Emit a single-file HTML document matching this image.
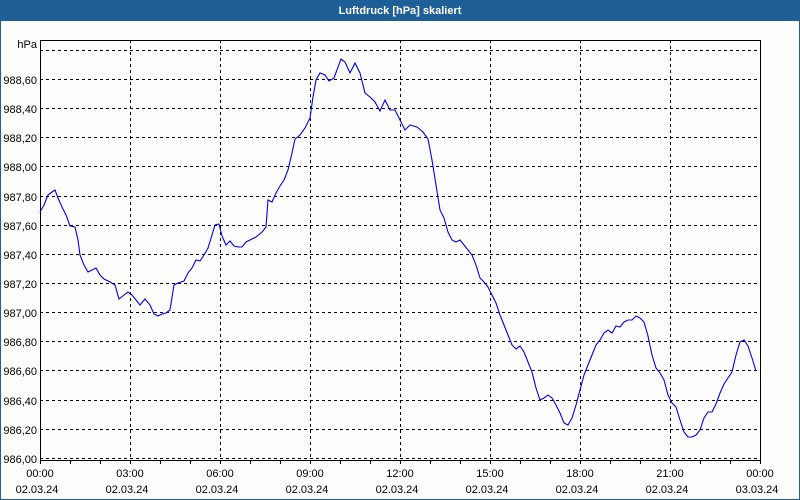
<!DOCTYPE html>
<html><head><meta charset="utf-8"><style>
html,body{margin:0;padding:0;background:#fff;}
body{width:800px;height:500px;position:relative;overflow:hidden;font-family:"Liberation Sans",sans-serif;}
</style></head><body>
<svg width="800" height="500" xmlns="http://www.w3.org/2000/svg" style="position:absolute;left:0;top:0">
<rect x="0" y="0" width="800" height="500" fill="#1f5f97"/>
<rect x="1" y="21" width="798" height="478" fill="#fdfefd"/>
<text x="400" y="14" fill="#fff" font-size="11" font-weight="bold" text-anchor="middle" font-family="Liberation Sans, sans-serif">Luftdruck [hPa] skaliert</text>
<g stroke="#000" stroke-width="1" stroke-dasharray="3,3" shape-rendering="crispEdges">
<line x1="40" y1="50.5" x2="760" y2="50.5"/>
<line x1="40" y1="79.5" x2="760" y2="79.5"/>
<line x1="40" y1="108.5" x2="760" y2="108.5"/>
<line x1="40" y1="137.5" x2="760" y2="137.5"/>
<line x1="40" y1="166.5" x2="760" y2="166.5"/>
<line x1="40" y1="196.5" x2="760" y2="196.5"/>
<line x1="40" y1="225.5" x2="760" y2="225.5"/>
<line x1="40" y1="254.5" x2="760" y2="254.5"/>
<line x1="40" y1="283.5" x2="760" y2="283.5"/>
<line x1="40" y1="312.5" x2="760" y2="312.5"/>
<line x1="40" y1="341.5" x2="760" y2="341.5"/>
<line x1="40" y1="370.5" x2="760" y2="370.5"/>
<line x1="40" y1="400.5" x2="760" y2="400.5"/>
<line x1="40" y1="429.5" x2="760" y2="429.5"/>
<line x1="40" y1="458.5" x2="760" y2="458.5"/>
<line x1="130.5" y1="40" x2="130.5" y2="460"/>
<line x1="220.5" y1="40" x2="220.5" y2="460"/>
<line x1="310.5" y1="40" x2="310.5" y2="460"/>
<line x1="400.5" y1="40" x2="400.5" y2="460"/>
<line x1="490.5" y1="40" x2="490.5" y2="460"/>
<line x1="580.5" y1="40" x2="580.5" y2="460"/>
<line x1="670.5" y1="40" x2="670.5" y2="460"/>
</g>
<g stroke="#000" stroke-width="1" fill="none" shape-rendering="crispEdges">
<path d="M40.5 40.5H760.5V460.5H40.5Z"/>
<path d="M40.5 460v4M70.5 460v4M100.5 460v4M130.5 460v4M160.5 460v4M190.5 460v4M220.5 460v4M250.5 460v4M280.5 460v4M310.5 460v4M340.5 460v4M370.5 460v4M400.5 460v4M430.5 460v4M460.5 460v4M490.5 460v4M520.5 460v4M550.5 460v4M580.5 460v4M610.5 460v4M640.5 460v4M670.5 460v4M700.5 460v4M730.5 460v4M760.5 460v4"/>
</g>
<polyline fill="none" stroke="#0000ee" stroke-width="1.1" points="40,212 44,205 48,195 52,192 55,190 58,198 62,207 66,215 70,226 75,227 78,240 80,255 84,265 88,272 92,270 96,268 100,275 104,279 110,282 115,285 119,299 124,295 128,292 132,295 136,300 140,305 145,299 150,305 154,314 158,316 162,314 166,313 170,310 174,285 178,283 184,281 188,273 192,268 196,260 200,261 204,255 208,248 212,235 215,225 219,224 222,236 226,245 230,241 234,246 238,247 242,247 246,242 252,239 256,237 262,232 266,227 268,200 272,202 276,193 280,186 284,180 288,170 292,153 295,139 300,135 305,128 310,118 313,97 316,80 320,73 325,75 329,81 334,78 341,59 345,62 350,73 355,63 360,73 365,93 370,97 375,102 380,111 385,100 390,110 395,110 400,120 405,130 410,125 417,127 423,132 428,139 432,160 436,185 440,210 444,218 448,232 452,240 456,242 460,240 464,245 468,250 472,255 476,265 480,278 484,282 488,287 492,295 496,303 500,315 504,325 508,335 512,345 516,349 520,346 524,352 528,362 532,372 536,388 540,400 544,398 548,395 552,398 556,405 560,413 564,423 568,425 572,418 576,405 580,390 584,375 588,365 592,355 596,345 600,340 604,333 608,330 612,333 616,326 620,327 624,322 628,320 632,320 636,316 640,318 644,322 648,336 652,355 656,368 660,373 664,380 668,395 672,403 676,407 680,420 684,432 688,437 692,437 696,435 700,430 704,418 708,412 712,412 716,404 720,393 724,384 728,378 732,372 736,355 740,342 744,340 748,346 752,358 756,371"/>
<g font-size="11" fill="#000" text-anchor="end" font-family="Liberation Sans, sans-serif">
<text x="37" y="48">hPa</text>
<text x="37" y="84">988,60</text>
<text x="37" y="113">988,40</text>
<text x="37" y="142">988,20</text>
<text x="37" y="171">988,00</text>
<text x="37" y="201">987,80</text>
<text x="37" y="230">987,60</text>
<text x="37" y="259">987,40</text>
<text x="37" y="288">987,20</text>
<text x="37" y="317">987,00</text>
<text x="37" y="346">986,80</text>
<text x="37" y="375">986,60</text>
<text x="37" y="405">986,40</text>
<text x="37" y="434">986,20</text>
<text x="37" y="463">986,00</text>
</g>
<g font-size="11" fill="#000" text-anchor="middle" font-family="Liberation Sans, sans-serif">
<text x="40" y="477">00:00</text><text x="37" y="493">02.03.24</text>
<text x="130" y="477">03:00</text><text x="127" y="493">02.03.24</text>
<text x="220" y="477">06:00</text><text x="217" y="493">02.03.24</text>
<text x="310" y="477">09:00</text><text x="307" y="493">02.03.24</text>
<text x="400" y="477">12:00</text><text x="397" y="493">02.03.24</text>
<text x="490" y="477">15:00</text><text x="487" y="493">02.03.24</text>
<text x="580" y="477">18:00</text><text x="577" y="493">02.03.24</text>
<text x="670" y="477">21:00</text><text x="667" y="493">02.03.24</text>
<text x="760" y="477">00:00</text><text x="757" y="493">03.03.24</text>
</g>
</svg>
</body></html>
